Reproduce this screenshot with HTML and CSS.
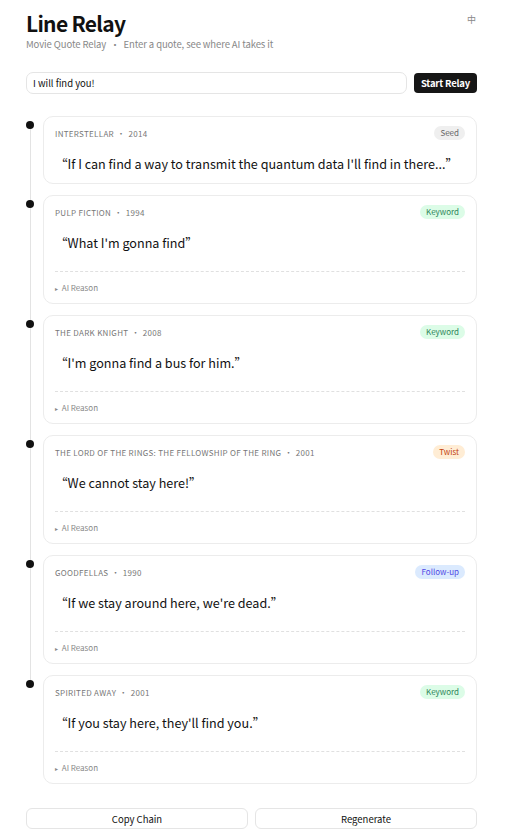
FILE: index.html
```html
<!DOCTYPE html>
<html>
<head>
  <title>Line Relay</title>
  <link rel="stylesheet" href="styles.css">
</head>
<body>
  <div class="page">
    <div class="header">
      <div>
        <h1 class="title">Line Relay</h1>
        <div class="subtitle">Movie Quote Relay <span class="sep">•</span> Enter a quote, see where AI takes it</div>
      </div>
      <button class="lang">中</button>
    </div>

    <div class="seed-row">
      <input type="text" class="seed-input" value="I will find you!">
      <button class="start-btn">Start Relay</button>
    </div>

    <div class="chain">
      <div class="node">
        <div class="card">
          <div class="card-head">
            <span class="meta">Interstellar <span class="sep">•</span> 2014</span>
            <span class="badge seed">Seed</span>
          </div>
          <div class="quote">“If I can find a way to transmit the quantum data I'll find in there...”</div>
        </div>
      </div>

      <div class="node">
        <div class="card">
          <div class="card-head">
            <span class="meta">Pulp Fiction <span class="sep">•</span> 1994</span>
            <span class="badge keyword">Keyword</span>
          </div>
          <div class="quote">“What I'm gonna find”</div>
          <div class="reason"><span class="caret">▸</span> AI Reason</div>
        </div>
      </div>

      <div class="node">
        <div class="card">
          <div class="card-head">
            <span class="meta">The Dark Knight <span class="sep">•</span> 2008</span>
            <span class="badge keyword">Keyword</span>
          </div>
          <div class="quote">“I'm gonna find a bus for him.”</div>
          <div class="reason"><span class="caret">▸</span> AI Reason</div>
        </div>
      </div>

      <div class="node">
        <div class="card">
          <div class="card-head">
            <span class="meta">The Lord of the Rings: The Fellowship of the Ring <span class="sep">•</span> 2001</span>
            <span class="badge twist">Twist</span>
          </div>
          <div class="quote">“We cannot stay here!”</div>
          <div class="reason"><span class="caret">▸</span> AI Reason</div>
        </div>
      </div>

      <div class="node">
        <div class="card">
          <div class="card-head">
            <span class="meta">Goodfellas <span class="sep">•</span> 1990</span>
            <span class="badge followup">Follow-up</span>
          </div>
          <div class="quote">“If we stay around here, we're dead.”</div>
          <div class="reason"><span class="caret">▸</span> AI Reason</div>
        </div>
      </div>

      <div class="node">
        <div class="card">
          <div class="card-head">
            <span class="meta">Spirited Away <span class="sep">•</span> 2001</span>
            <span class="badge keyword">Keyword</span>
          </div>
          <div class="quote">“If you stay here, they'll find you.”</div>
          <div class="reason"><span class="caret">▸</span> AI Reason</div>
        </div>
      </div>
    </div>

    <div class="actions">
      <button class="action-btn">Copy Chain</button>
      <button class="action-btn">Regenerate</button>
    </div>
  </div>
</body>
</html>
```

FILE: styles.css
```css
body {
  margin: 0;
  background: #fff;
  color: #111;
  font-family: "Noto Sans CJK SC", "Noto Sans", sans-serif;
}
.page {
  padding: 9px 30px 10px 26px;
}
.header {
  display: flex;
  justify-content: space-between;
  align-items: flex-start;
}
.title {
  margin: 0;
  font-size: 21px;
  font-weight: 700;
  letter-spacing: -0.7px;
  line-height: 28px;
}
.subtitle {
  font-size: 9.5px;
  letter-spacing: -0.1px;
  color: #888;
  line-height: 14px;
}
.subtitle .sep {
  margin: 0 2px;
}
.lang {
  border: none;
  background: none;
  font-family: inherit;
  font-size: 9px;
  color: #888;
  padding: 0;
  margin-top: 4px;
  margin-right: 1px;
}
.seed-row {
  display: flex;
  gap: 7px;
  margin-top: 21px;
  align-items: center;
}
.seed-input {
  flex: 1;
  height: 22px;
  box-sizing: border-box;
  border: 1px solid #e5e5e5;
  border-radius: 7px;
  padding: 0 6px;
  font-family: inherit;
  font-size: 9.5px;
  color: #111;
}
.start-btn {
  height: 20px;
  border: none;
  border-radius: 4px;
  background: #161616;
  color: #fff;
  font-family: inherit;
  font-size: 9.5px;
  letter-spacing: -0.2px;
  font-weight: 700;
  padding: 0 7px;
}
.chain {
  margin-top: 22px;
  padding-left: 17px;
}
.node {
  position: relative;
  margin-bottom: 11px;
}
.node::before {
  content: "";
  position: absolute;
  z-index: 1;
  left: -17px;
  top: 5px;
  width: 8px;
  height: 8px;
  border-radius: 50%;
  background: #111;
}
.node:not(:last-child)::after {
  content: "";
  position: absolute;
  left: -13px;
  top: 9px;
  bottom: -20px;
  width: 1px;
  background: #e3e3e3;
}
.card {
  border: 1px solid #ececec;
  border-radius: 10px;
  padding: 9px 11px 9px;
}
.card-head {
  display: flex;
  justify-content: space-between;
  align-items: center;
  height: 14px;
}
.meta {
  font-size: 8px;
  text-transform: uppercase;
  letter-spacing: 0.3px;
  color: #777;
}
.meta .sep {
  margin: 0 1px;
}
.badge {
  font-size: 8px;
  line-height: 14px;
  padding: 0 6px;
  border-radius: 8px;
}
.seed {
  background: #efefef;
  color: #666;
}
.keyword {
  background: #dcfce7;
  color: #2f855a;
}
.twist {
  background: #ffedd5;
  color: #c2410c;
}
.followup {
  background: #dbeafe;
  color: #4f46e5;
}
.quote {
  font-size: 12.6px;
  line-height: 18px;
  margin: 15px 0 1px 0;
}
.reason {
  margin-top: 19px;
  border-top: 1px dashed #e0e0e0;
  padding-top: 10px;
  font-size: 8px;
  line-height: 12px;
  color: #888;
}
.caret {
  font-size: 6px;
  line-height: 0;
  margin-right: 2px;
}
.actions {
  display: flex;
  gap: 7px;
  margin-top: 24px;
}
.action-btn {
  flex: 1;
  height: 21px;
  border: 1px solid #e5e5e5;
  border-radius: 6px;
  background: #fff;
  font-family: inherit;
  font-size: 9.5px;
  color: #111;
}
```
